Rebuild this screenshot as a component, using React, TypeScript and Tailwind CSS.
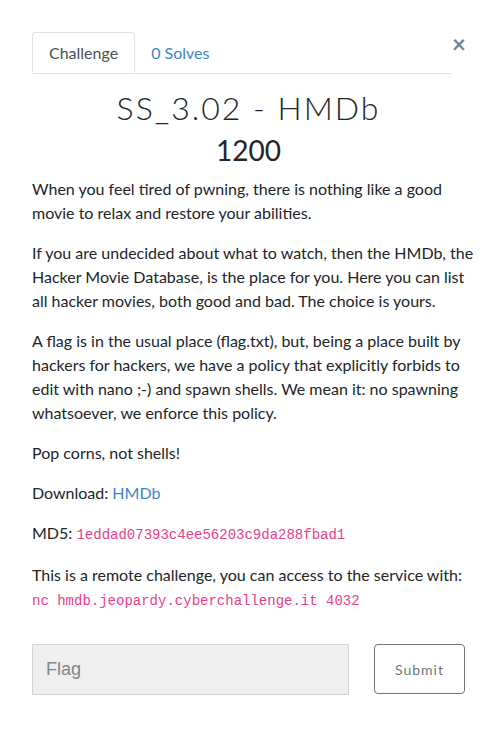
export default function App() {
  return (
    <div className="min-h-[743px] bg-white font-['Lato','Open_Sans',sans-serif] text-[#212529]">
      <div className="pl-8 pr-8 pt-8 pb-10">
        <div className="flex items-start">
          <nav className="flex flex-1 border-b border-[#dee2e6]">
            <button className="-mb-px h-[41px] rounded-t-[4px] border border-[#dee2e6] border-b-white bg-white px-4 text-[16px] text-[#495057]">
              Challenge
            </button>
            <button className="h-[41px] px-4 text-[16px] text-[#3a87c8]">0 Solves</button>
          </nav>
          <button className="w-[13px] text-[24px] font-bold leading-[24px] text-[#7f7f7f]">
            ×
          </button>
        </div>

        <h2 className="mt-[14px] text-center text-[32px] font-light leading-[40px] tracking-[2px] text-[#212529]">
          SS_3.02 - HMDb
        </h2>
        <h3 className="mt-[5px] text-center text-[28px] leading-[34px]">1200</h3>

        <div className="-mr-4 mt-[10px] text-[16px] leading-6">
          <p className="mb-4">
            When you feel tired of pwning, there is nothing like a good movie to relax and restore
            your abilities.
          </p>
          <p className="mb-4">
            If you are undecided about what to watch, then the HMDb, the Hacker Movie Database, is
            the place for you. Here you can list all hacker movies, both good and bad. The choice is
            yours.
          </p>
          <p className="mb-4">
            A flag is in the usual place (flag.txt), but, being a place built by hackers for
            hackers, we have a policy that explicitly forbids to edit with nano ;-) and spawn
            shells. We mean it: no spawning whatsoever, we enforce this policy.
          </p>
          <p className="mb-4">Pop corns, not shells!</p>
          <p className="mb-4">
            Download: <a className="text-[#3a87c8]">HMDb</a>
          </p>
          <p className="mb-4">
            MD5:{" "}
            <code className="font-['Liberation_Mono',monospace] text-[14px] text-[#e83e8c]">
              1eddad07393c4ee56203c9da288fbad1
            </code>
          </p>
          <p>
            This is a remote challenge, you can access to the service with:
            <br />
            <code className="font-['Liberation_Mono',monospace] text-[14px] text-[#e83e8c]">
              nc hmdb.jeopardy.cyberchallenge.it 4032
            </code>
          </p>
        </div>

        <div className="mt-[31px] flex items-start">
          <input
            placeholder="Flag"
            className="h-[51px] w-[317px] border border-[#ced4da] bg-[#efefef] px-[13px] font-['Liberation_Sans',sans-serif] text-[18px] text-[#495057] placeholder:text-[#7d8690]"
          />
          <button className="ml-auto h-[50px] w-[91px] rounded-[4px] border border-[#6c757d] bg-white text-[14px] tracking-[1px] text-[#6c757d]">
            Submit
          </button>
        </div>
      </div>
    </div>
  );
}
